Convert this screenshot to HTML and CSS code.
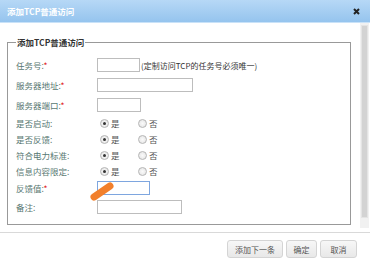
FILE: index.html
```html
<!DOCTYPE html>
<html lang="zh-CN">
<head>
    <meta charset="UTF-8">
    <title>添加TCP普通访问</title>
    <link rel="stylesheet" href="styles.css">
</head>
<body>
    <div class="dlg">
        <div class="dlg-title">
            <span>添加TCP普通访问</span>
            <svg class="close" width="7" height="7" viewBox="0 0 7 7"><path d="M1 1L6 6M6 1L1 6" stroke="#222" stroke-width="2"/></svg>
        </div>

        <div class="dlg-body">
            <div class="dlg-main">
                <fieldset class="box">
                    <legend>添加TCP普通访问</legend>

                    <div class="row">
                        <label class="lbl">任务号:<i>*</i></label>
                        <span class="ipt w43"></span>
                        <span class="hint">(定制访问TCP的任务号必须唯一)</span>
                    </div>
                    <div class="row">
                        <label class="lbl">服务器地址:<i>*</i></label>
                        <span class="ipt w96"></span>
                    </div>
                    <div class="row">
                        <label class="lbl">服务器端口:<i>*</i></label>
                        <span class="ipt w44"></span>
                    </div>

                    <div class="row radio">
                        <label class="lbl">是否启动:</label>
                        <span class="opt"><span class="rd on"></span>是</span>
                        <span class="opt"><span class="rd"></span>否</span>
                    </div>
                    <div class="row radio">
                        <label class="lbl">是否反馈:</label>
                        <span class="opt"><span class="rd on"></span>是</span>
                        <span class="opt"><span class="rd"></span>否</span>
                    </div>
                    <div class="row radio">
                        <label class="lbl">符合电力标准:</label>
                        <span class="opt"><span class="rd on"></span>是</span>
                        <span class="opt"><span class="rd"></span>否</span>
                    </div>
                    <div class="row radio">
                        <label class="lbl">信息内容限定:</label>
                        <span class="opt"><span class="rd on"></span>是</span>
                        <span class="opt"><span class="rd"></span>否</span>
                    </div>

                    <div class="row short">
                        <label class="lbl">反馈值:<i>*</i></label>
                        <span class="ipt w53 focus"></span>
                    </div>
                    <div class="row">
                        <label class="lbl">备注:</label>
                        <span class="ipt w85"></span>
                    </div>
                </fieldset>
            </div>
            <div class="scroll"><div class="thumb"></div></div>
        </div>

        <div class="dlg-foot">
            <button class="btn b-next">添加下一条</button>
            <button class="btn b-ok">确定</button>
            <button class="btn b-cancel">取消</button>
        </div>

        <svg class="mark" width="30" height="22" viewBox="0 0 30 22"><path d="M5 18L21 7" stroke="#f2802c" stroke-width="7" stroke-linecap="round"/></svg>
    </div>
</body>
</html>
```

FILE: styles.css
```css
body {
    margin: 0;
    font-family: "Noto Sans CJK SC", "DejaVu Sans", sans-serif;
    font-size: 8.5px;
    color: #333;
    background: #fff;
}

.dlg {
    position: relative;
    width: 370px;
    height: 260px;
    overflow: hidden;
}

.dlg-title {
    height: 23px;
    display: flex;
    align-items: center;
    justify-content: space-between;
    padding: 0 7px 0 7px;
    background: linear-gradient(#b6d8f6, #95c4ee);
    border-bottom: 1px solid #c9e2f8;
    box-sizing: border-box;
    color: #fff;
    font-weight: bold;
}

.close {
    margin-right: 3px;
}

.dlg-body {
    display: flex;
    height: 209px;
    border-bottom: 1px solid #d9d9d9;
}

.dlg-main {
    flex: 1;
}

.scroll {
    width: 9px;
    height: 205px;
    margin-right: 1px;
    background: #f1f1f1;
    box-sizing: border-box;
    padding: 2px 1px;
}

.thumb {
    height: 193px;
    background: #d3d3d3;
    border: 1px solid #e4e4e4;
    box-sizing: border-box;
}

.box {
    margin: 12px 9px 0 7px;
    padding: 6px 8px 7px 8px;
    border: 1px solid #999;
    min-width: 0;
}

.box legend {
    padding: 0 1px;
    font-weight: bold;
    color: #333;
    line-height: 14px;
}

.row {
    display: flex;
    align-items: center;
    height: 20px;
}

.row.radio {
    height: 16px;
}

.row.short {
    height: 18px;
}

.lbl {
    width: 81px;
    flex: none;
    color: #587872;
}

.lbl i {
    font-style: normal;
    color: #e02020;
}

.ipt {
    display: block;
    height: 14px;
    border: 1px solid #bdbdbd;
    box-sizing: border-box;
    background: #fff;
}

.ipt.focus {
    border-color: #7ea6df;
}

.w43 { width: 43px; }
.w44 { width: 44px; }
.w53 { width: 53px; }
.w85 { width: 85px; }
.w96 { width: 96px; }

.hint {
    margin-left: 1px;
    font-size: 8px;
    color: #333;
}

.opt {
    width: 38px;
    display: flex;
    align-items: center;
    color: #555;
}

.rd {
    width: 9px;
    height: 9px;
    margin: 0 2px 0 3px;
    border: 1px solid #b5b5b5;
    border-radius: 50%;
    box-sizing: border-box;
    background: radial-gradient(#fafafa, #e2e2e2);
    position: relative;
}

.rd.on::after {
    content: "";
    position: absolute;
    left: 2px;
    top: 2px;
    width: 3px;
    height: 3px;
    border-radius: 50%;
    background: #333;
}

.dlg-foot {
    display: flex;
    justify-content: flex-end;
    gap: 3px;
    padding: 7px 13px 0 0;
}

.btn {
    height: 18px;
    padding: 0;
    border: 1px solid #d4d4d4;
    border-radius: 3px;
    background: linear-gradient(#f7f7f7, #e8e8e8);
    font-family: inherit;
    font-size: 8px;
    color: #555;
}

.b-next { width: 56px; }
.b-ok { width: 31px; }
.b-cancel { width: 37px; }

.mark {
    position: absolute;
    left: 89px;
    top: 179px;
}
```
